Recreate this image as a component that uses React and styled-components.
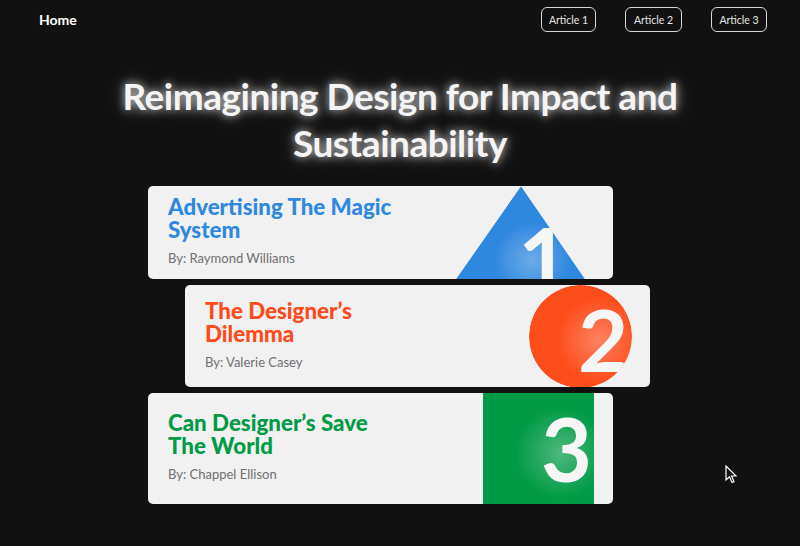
import React from "react";
import styled, { createGlobalStyle } from "styled-components";

const GlobalStyle = createGlobalStyle`
  html, body { margin: 0; padding: 0; background: #111111; }
  body { font-family: Lato, "Open Sans", sans-serif; -webkit-font-smoothing: antialiased; }
`;

const Page = styled.div`
  position: relative;
  min-height: 546px;
  background: #111111;
  overflow: hidden;
`;

const NavBar = styled.nav`
  display: flex;
  justify-content: space-between;
  align-items: center;
  padding: 7px 33px 0 39px;
`;

const HomeLink = styled.a`
  color: #ffffff;
  font-weight: 700;
  font-size: 14px;
  text-decoration: none;
`;

const NavButtons = styled.div`
  display: flex;
  gap: 29px;
`;

const NavButton = styled.button`
  box-sizing: border-box;
  height: 25px;
  width: ${(p) => p.$w}px;
  background: transparent;
  border: 1.5px solid #d6d6d6;
  border-radius: 6px;
  color: #e8e8e8;
  font-family: Lato, sans-serif;
  font-size: 10.5px;
  padding: 0;
`;

const Title = styled.h1`
  margin: 40px auto 0;
  max-width: 600px;
  text-align: center;
  color: #f4f4f4;
  font-size: 37px;
  letter-spacing: -0.5px;
  line-height: 47px;
  font-weight: 700;
  text-shadow: 0 0 8px rgba(255, 255, 255, 0.75), 0 0 18px rgba(255, 255, 255, 0.35);
`;

const CardList = styled.div`
  width: 502px;
  margin: 20px auto 0;
  padding-right: 2px;
  display: flex;
  flex-direction: column;
  gap: 6px;
`;

const Card = styled.article`
  box-sizing: border-box;
  width: 465px;
  height: ${(p) => p.$h}px;
  align-self: ${(p) => (p.$shift ? "flex-end" : "flex-start")};
  background: #f1f1f2;
  border-radius: 5px;
  display: flex;
  align-items: center;
  justify-content: space-between;
  padding-left: 20px;
  padding-right: ${(p) => p.$pr}px;
  overflow: hidden;
`;

const TextBlock = styled.div`
  max-width: 232px;
  padding-bottom: 4px;
`;

const CardTitle = styled.h2`
  margin: 0;
  color: ${(p) => p.$color};
  font-size: 22.3px;
  line-height: 23px;
  font-weight: 900;
`;

const Author = styled.p`
  margin: 9px 0 0;
  color: #707070;
  font-size: 13px;
  line-height: 16px;
`;

const Shape = styled.svg`
  flex: none;
  display: block;
  align-self: stretch;
  height: 100%;
`;

const NumberText = styled.text`
  font-family: Lato, sans-serif;
  font-weight: 700;
  fill: #f6f6f6;
`;

const Cursor = styled.svg`
  position: absolute;
  left: 725px;
  top: 465px;
`;

function Glow({ id, cx, cy, r }) {
  return (
    <radialGradient id={id} cx={cx} cy={cy} r={r} gradientUnits="userSpaceOnUse">
      <stop offset="0" stopColor="#ffffff" stopOpacity="0.3" />
      <stop offset="1" stopColor="#ffffff" stopOpacity="0" />
    </radialGradient>
  );
}

function Triangle() {
  return (
    <Shape width="129" height="93" viewBox="0 0 129 93">
      <defs>
        <Glow id="g1" cx="76" cy="74" r="38" />
        <clipPath id="c1">
          <polygon points="65,0 0,93 129,93" />
        </clipPath>
      </defs>
      <g clipPath="url(#c1)">
        <polygon points="65,0 0,93 129,93" fill="#2f88e0" />
        <rect x="0" y="0" width="129" height="93" fill="url(#g1)" />
        <NumberText x="62" y="107" fontSize="90" fontFamily="Lato" fontWeight="700">1</NumberText>
      </g>
    </Shape>
  );
}

function Circle() {
  return (
    <Shape width="103" height="102" viewBox="0 0 103 102">
      <defs>
        <Glow id="g2" cx="70" cy="55" r="42" />
        <clipPath id="c2">
          <circle cx="51.5" cy="51.5" r="51.5" />
        </clipPath>
      </defs>
      <g clipPath="url(#c2)">
        <circle cx="51.5" cy="51.5" r="51.5" fill="#fd4d1b" />
        <rect x="0" y="0" width="103" height="103" fill="url(#g2)" />
        <NumberText x="49" y="87" fontSize="87" fontFamily="Lato" fontWeight="700">2</NumberText>
      </g>
    </Shape>
  );
}

function Square() {
  return (
    <Shape width="111" height="111" viewBox="0 0 111 111">
      <defs>
        <Glow id="g3" cx="78" cy="60" r="46" />
      </defs>
      <rect x="0" y="0" width="111" height="111" fill="#019a45" />
      <rect x="0" y="0" width="111" height="111" fill="url(#g3)" />
      <NumberText x="58" y="89" fontSize="88" fontFamily="Lato" fontWeight="700">3</NumberText>
    </Shape>
  );
}

const articles = [
  { title: "Advertising The Magic System", author: "By: Raymond Williams", color: "#2f88e0", h: 93, pr: 28, shift: false, Art: Triangle },
  { title: "The Designer’s Dilemma", author: "By: Valerie Casey", color: "#fc4a1a", h: 102, pr: 18, shift: true, Art: Circle },
  { title: "Can Designer’s Save The World", author: "By: Chappel Ellison", color: "#019a45", h: 111, pr: 19, shift: false, Art: Square },
];

export default function App() {
  return (
    <Page>
      <GlobalStyle />
      <NavBar>
        <HomeLink href="#">Home</HomeLink>
        <NavButtons>
          <NavButton $w={55}>Article 1</NavButton>
          <NavButton $w={57}>Article 2</NavButton>
          <NavButton $w={56}>Article 3</NavButton>
        </NavButtons>
      </NavBar>
      <Title>Reimagining Design for Impact and Sustainability</Title>
      <CardList>
        {articles.map(({ title, author, color, h, pr, shift, Art }) => (
          <Card key={title} $h={h} $pr={pr} $shift={shift}>
            <TextBlock>
              <CardTitle $color={color}>{title}</CardTitle>
              <Author>{author}</Author>
            </TextBlock>
            <Art />
          </Card>
        ))}
      </CardList>
      <Cursor width="13" height="20" viewBox="0 0 13 20">
        <path d="M1 1 L1 15 L4.5 11.8 L7 17.5 L9 16.6 L6.6 11 L11 11 Z" fill="#111" stroke="#fff" strokeWidth="1.2" strokeLinejoin="miter" />
      </Cursor>
    </Page>
  );
}
